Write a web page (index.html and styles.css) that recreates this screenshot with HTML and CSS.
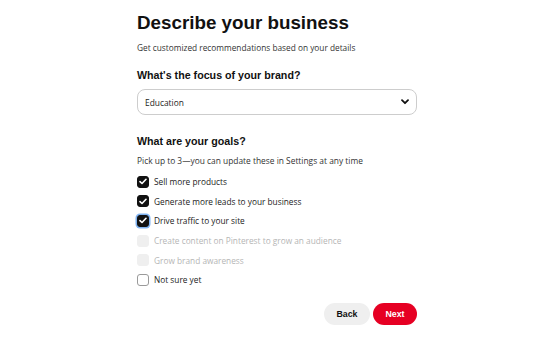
FILE: index.html
```html
<!DOCTYPE html>
<html lang="en">
<head>
    <meta charset="UTF-8">
    <meta name="viewport" content="width=device-width, initial-scale=1.0">
    <title>Describe your business</title>
    <link rel="stylesheet" href="styles.css">
</head>
<body>
    <div class="container">
        <div class="header">
            <h1>Describe your business</h1>
            <p>Get customized recommendations based on your details</p>
        </div>

        <div class="section">
            <h2>What's the focus of your brand?</h2>
            <div class="select">
                <span>Education</span>
                <svg class="chevron" width="8" height="6" viewBox="0 0 8 6">
                    <path d="M1 1.2 L4 4.2 L7 1.2" fill="none" stroke="#111" stroke-width="1.8" stroke-linecap="round" stroke-linejoin="round"/>
                </svg>
            </div>
        </div>

        <div class="section goals">
            <h2>What are your goals?</h2>
            <p class="hint">Pick up to 3—you can update these in Settings at any time</p>

            <ul class="options">
                <li class="option">
                    <span class="box checked"><svg width="8" height="7" viewBox="0 0 8 7"><path d="M1 3.6 L3 5.5 L7 1.3" fill="none" stroke="#fff" stroke-width="1.6" stroke-linecap="round" stroke-linejoin="round"/></svg></span>
                    <span>Sell more products</span>
                </li>
                <li class="option">
                    <span class="box checked"><svg width="8" height="7" viewBox="0 0 8 7"><path d="M1 3.6 L3 5.5 L7 1.3" fill="none" stroke="#fff" stroke-width="1.6" stroke-linecap="round" stroke-linejoin="round"/></svg></span>
                    <span>Generate more leads to your business</span>
                </li>
                <li class="option">
                    <span class="box checked focused"><svg width="8" height="7" viewBox="0 0 8 7"><path d="M1 3.6 L3 5.5 L7 1.3" fill="none" stroke="#fff" stroke-width="1.6" stroke-linecap="round" stroke-linejoin="round"/></svg></span>
                    <span>Drive traffic to your site</span>
                </li>
                <li class="option disabled">
                    <span class="box"></span>
                    <span>Create content on Pinterest to grow an audience</span>
                </li>
                <li class="option disabled">
                    <span class="box"></span>
                    <span>Grow brand awareness</span>
                </li>
                <li class="option">
                    <span class="box"></span>
                    <span>Not sure yet</span>
                </li>
            </ul>
        </div>

        <div class="actions">
            <button class="btn btn-back">Back</button>
            <button class="btn btn-next">Next</button>
        </div>
    </div>
</body>
</html>
```

FILE: styles.css
```css
* {
    margin: 0;
    padding: 0;
    box-sizing: border-box;
}

body {
    font-family: 'Open Sans', 'Noto Sans', sans-serif;
    background: #fff;
    color: #111;
}

.container {
    width: 280px;
    margin-left: 137px;
    padding-top: 10px;
}

.header h1 {
    font-family: 'Liberation Sans', Arial, sans-serif;
    font-size: 18.8px;
    font-weight: 700;
    line-height: 26px;
}

.header p {
    font-size: 8.3px;
    color: #333;
    margin-top: 5px;
    line-height: 14px;
}

.section h2 {
    font-family: 'Liberation Sans', Arial, sans-serif;
    font-size: 10.7px;
    font-weight: 700;
    line-height: 16px;
}

.section {
    margin-top: 12px;
}

.select {
    margin-top: 6px;
    height: 26px;
    border: 1px solid #cdcdcd;
    border-radius: 8px;
    display: flex;
    align-items: center;
    justify-content: space-between;
    padding: 0 7px 0 7px;
    font-size: 8.4px;
    color: #222;
}

.goals {
    margin-top: 18px;
}

.hint {
    font-size: 8.4px;
    color: #333;
    margin-top: 5px;
    line-height: 14px;
}

.options {
    list-style: none;
    margin-top: 4px;
}

.option {
    display: flex;
    align-items: center;
    gap: 5px;
    height: 19.6px;
    font-size: 8.3px;
    color: #222;
}

.box {
    width: 12px;
    height: 12px;
    border-radius: 3px;
    border: 1px solid #9a9a9a;
    background: #fff;
    display: flex;
    align-items: center;
    justify-content: center;
    flex-shrink: 0;
}

.box.checked {
    background: #111;
    border-color: #111;
}

.box.focused {
    box-shadow: 0 0 0 1.5px #7fb2f0;
}

.option.disabled {
    color: #b5b5b5;
}

.option.disabled .box {
    background: #efefef;
    border-color: #efefef;
}

.actions {
    display: flex;
    justify-content: flex-end;
    gap: 3px;
    margin-top: 13px;
}

.btn {
    font-family: 'Liberation Sans', Arial, sans-serif;
    font-size: 8.8px;
    font-weight: 700;
    height: 22px;
    border: none;
    border-radius: 11px;
    padding: 0;
    cursor: pointer;
}

.btn-back {
    background: #efefef;
    color: #111;
    width: 46px;
}

.btn-next {
    background: #e60023;
    color: #fff;
    width: 44px;
}
```
